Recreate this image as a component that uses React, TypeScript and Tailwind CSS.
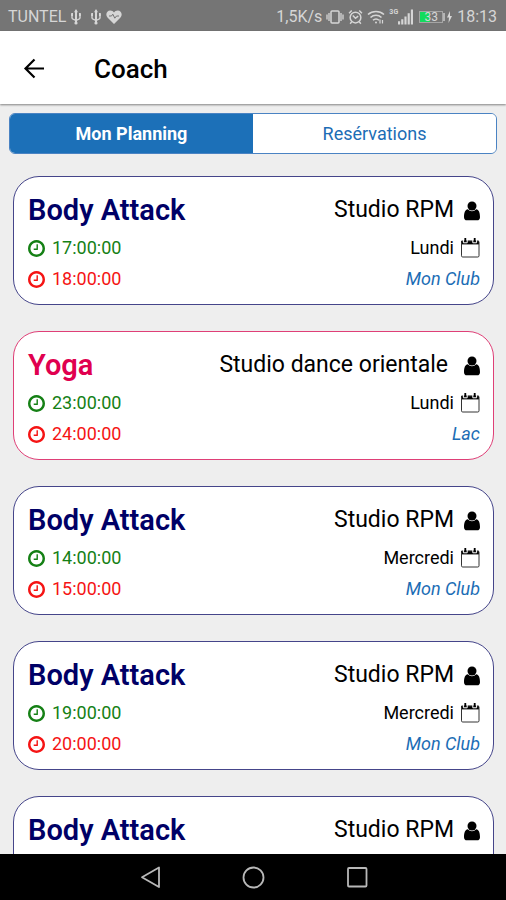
import { FC } from "react";

type Session = {
  id: number;
  title: string;
  studio: string;
  start?: string;
  end?: string;
  day?: string;
  club?: string;
  featured?: boolean;
};

const sessions: Session[] = [
  { id: 1, title: "Body Attack", studio: "Studio RPM", start: "17:00:00", end: "18:00:00", day: "Lundi", club: "Mon Club" },
  { id: 2, title: "Yoga", studio: "Studio dance orientale", start: "23:00:00", end: "24:00:00", day: "Lundi", club: "Lac", featured: true },
  { id: 3, title: "Body Attack", studio: "Studio RPM", start: "14:00:00", end: "15:00:00", day: "Mercredi", club: "Mon Club" },
  { id: 4, title: "Body Attack", studio: "Studio RPM", start: "19:00:00", end: "20:00:00", day: "Mercredi", club: "Mon Club" },
  { id: 5, title: "Body Attack", studio: "Studio RPM" },
];

const UserIcon: FC = () => (
  <svg viewBox="0 0 16 20" className="w-4 h-5" fill="currentColor" aria-hidden="true">
    <circle cx="8" cy="5" r="4.5" />
    <path d="M3.8 8.2C5 9.500 6.400 10.200 8 10.200s3-.7 4.200-2C14.800 8.500 16 11.500 16 16.200c0 1.900-1.200 3.100-2.800 3.100H2.800C1.200 19.300 0 18.100 0 16.200 0 11.500 1.200 8.500 3.800 8.200z" />
  </svg>
);

const ClockIcon: FC = () => (
  <svg viewBox="128 128 1536 1536" className="w-[17px] h-[17px]" fill="currentColor" aria-hidden="true">
    <path d="M1024 544v448q0 14-9 23t-23 9h-320q-14 0-23-9t-9-23v-64q0-14 9-23t23-9h224v-352q0-14 9-23t23-9h64q14 0 23 9t9 23zm416 352q0-148-73-273t-198-198-273-73-273 73-198 198-73 273 73 273 198 198 273 73 273-73 198-198 73-273zm224 0q0 209-103 385.5t-279.5 279.5-385.5 103-385.5-103-279.5-279.5-103-385.5 103-385.5 279.5-279.5 385.5-103 385.5 103 279.5 279.5 103 385.5z" />
  </svg>
);

const CalendarIcon: FC = () => (
  <svg viewBox="0 0 20 20" className="w-5 h-5" fill="none" stroke="currentColor" aria-hidden="true">
    <path d="M1 2.8h18v3.6H1z" fill="currentColor" stroke="none" />
    <rect x="1.5" y="3" width="17.5" height="16" rx="1.2" stroke="#333" />
    <path d="M3.4 2v2.8h3.8V2M12.8 2v2.8h3.8V2" stroke="#fff" />
    <path d="M5.3 0v4M14.7 0v4" strokeWidth="1.8" />
  </svg>
);

const UsbIcon: FC = () => (
  <svg viewBox="0 0 12 16" className="w-3 h-4" fill="none" stroke="currentColor" strokeWidth="1.4" aria-hidden="true">
    <path d="M2 5v4c0 1.8 4 1.5 4 3M10 5v4c0 1.8-4 1.5-4 3" />
    <path d="M6 1.5v12" strokeWidth="2" />
    <path d="M6 0 4 3.2h4zM1.2 4h1.8v3H1.2zM9 4h1.8v3H9z" fill="currentColor" stroke="none" />
    <circle cx="6" cy="14" r="1.6" fill="currentColor" stroke="none" />
  </svg>
);

const StatusBar: FC = () => (
  <div className="h-[31px] shrink-0 flex items-center justify-between bg-[#757575] pt-0.5 pl-2 pr-[9px] text-base text-[#d6d6d6]">
    <div className="flex items-center gap-1">
      <span>TUNTEL</span>
      <div className="flex gap-2">
        <UsbIcon />
        <UsbIcon />
      </div>
      <svg viewBox="0 0 16 14" className="w-4 h-4" aria-hidden="true">
        <path d="M8 14 1.5 7.6C-1 4.5.8.4 4.2.4 6 .4 7.3 1.3 8 2.5 8.7 1.3 10 .4 11.8.4c3.4 0 5.2 4.1 2.7 7.2z" fill="currentColor" />
        <path d="M3 6h2.5l1.3-1.8 2 4L10.5 6H13" fill="none" stroke="#757575" />
      </svg>
    </div>
    <div className="flex items-center gap-1">
      <span>1,5K/s</span>
      <svg viewBox="0 0 18 14" className="w-[18px] h-4" fill="none" stroke="currentColor" strokeWidth="1.5" aria-hidden="true">
        <rect x="5" y="1" width="8" height="12" rx="1" />
        <path d="M3 3v8M1 4.5v5M15 3v8M17 4.5v5" strokeWidth="1.3" />
      </svg>
      <svg viewBox="0 0 14 14" className="w-[15px] h-4" fill="none" stroke="currentColor" strokeWidth="1.4" aria-hidden="true">
        <circle cx="7" cy="7.5" r="5" />
        <path d="M4.5 5.5 7 8.2l2.5-2M1 3.5 3.5 1M13 3.5 10.5 1M3.5 11.5 2 13.2M10.5 11.5l1.5 1.7" />
      </svg>
      <svg viewBox="0 0 18 14" className="w-[18px] h-4" fill="none" stroke="currentColor" strokeWidth="1.6" aria-hidden="true">
        <path d="M1 4.5C5.5.5 12.5.5 17 4.5M3.5 7.5c3.2-3 7.8-3 11 0M6 10.3c1.7-1.7 4.3-1.7 6 0" />
        <circle cx="9" cy="12.5" r="1" fill="currentColor" stroke="none" />
        <path d="M13 13.5v-4M15.5 10v3.5" strokeWidth="1.2" />
      </svg>
      <div className="flex items-start">
        <span className="text-[7px] leading-none font-bold">3G</span>
        <svg viewBox="0 0 14 14" className="w-[15px] h-4" fill="currentColor" aria-hidden="true">
          <path d="M0 11h2v3H0zM3 9h2v5H3zM6 6.5h2V14H6zM9 3.5h2V14H9zM12 0h2v14h-2z" />
        </svg>
      </div>
      <div className="flex items-center ml-0.5">
        <div className="w-6 h-3 flex items-center justify-center border border-[#a5a5a5] bg-linear-to-r from-[#12dc5c] from-45% to-[#757575] to-45% text-xs leading-none">
          33
        </div>
        <div className="w-0.5 h-2 bg-[#b5b5b5]" />
        <svg viewBox="0 0 6 12" className="w-2 h-3" fill="currentColor" aria-hidden="true">
          <path d="M4 0 1 6.5h2L2.5 12 6 5H4z" />
        </svg>
      </div>
      <span>18:13</span>
    </div>
  </div>
);

const SessionCard: FC<{ session: Session }> = ({ session }) => (
  <li
    className={`flex flex-col min-h-[129px] bg-white border rounded-[26px] pl-3.5 pr-[13px] pt-[15px] pb-[13px] ${
      session.featured ? "border-[#df3f77]" : "border-[#45458a]"
    }`}
  >
    <div className="flex justify-between items-center h-[37px]">
      <h2
        className={`text-[29px] font-semibold ${
          session.featured ? "text-[#e0004f]" : "text-[#000066]"
        }`}
      >
        {session.title}
      </h2>
      <p className={`flex items-center text-[23px] ${session.featured ? "gap-4" : "gap-2.5"}`}>
        {session.studio}
        <UserIcon />
      </p>
    </div>
    {session.start && (
      <div className="flex justify-between items-center h-[38px] text-lg">
        <p className="flex items-center gap-[7px] text-[#158015]">
          <ClockIcon />
          {session.start}
        </p>
        <p className="flex items-center gap-1.5">
          {session.day}
          <CalendarIcon />
        </p>
      </div>
    )}
    {session.end && (
      <div className="flex justify-between items-center h-6 text-lg">
        <p className="flex items-center gap-[7px] text-[#f51414]">
          <ClockIcon />
          {session.end}
        </p>
        <p className="italic text-[#1c6db5]">{session.club}</p>
      </div>
    )}
  </li>
);

const App: FC = () => {
  return (
    <div className="h-screen flex flex-col overflow-hidden bg-[#eeeeee] font-['Roboto',sans-serif] text-black">
      <StatusBar />
      <header className="h-[73px] shrink-0 flex items-center gap-12 bg-white px-[22px] pt-[3px] shadow-[0_1px_2px_rgba(0,0,0,0.45)]">
        <button type="button" aria-label="Retour">
          <svg viewBox="0 0 24 24" className="w-6 h-6" fill="none" stroke="currentColor" strokeWidth="2.2" aria-hidden="true">
            <path d="M22 11.5H3.5M12.5 2.5l-9 9 9 9" />
          </svg>
        </button>
        <h1 className="text-[26px] font-medium">Coach</h1>
      </header>
      <main className="flex-1 min-h-0 overflow-hidden">
        <div className="flex h-[41px] mx-[9px] mt-[9px] border border-[#4a83c3] rounded-md overflow-hidden text-lg text-[#1c6db5]">
          <button type="button" className="flex-1 bg-[#1c70b8] text-white font-bold">
            Mon Planning
          </button>
          <button type="button" className="flex-1 bg-white">
            Resérvations
          </button>
        </div>
        <ul className="flex flex-col gap-[26px] pl-[13px] pr-3 pt-[22px]">
          {sessions.map((session) => (
            <SessionCard key={session.id} session={session} />
          ))}
        </ul>
      </main>
      <nav className="h-[46px] shrink-0 flex items-center justify-center gap-20 bg-black text-[#b8b8b8]">
        <button type="button" aria-label="Précédent">
          <svg viewBox="0 0 24 24" className="w-6 h-6" fill="none" stroke="currentColor" strokeWidth="1.8" strokeLinejoin="round" aria-hidden="true">
            <path d="M22 2.5V22L5 12.3z" />
          </svg>
        </button>
        <button type="button" aria-label="Accueil">
          <svg viewBox="0 0 24 24" className="w-6 h-6" fill="none" stroke="currentColor" strokeWidth="1.8" aria-hidden="true">
            <circle cx="12.5" cy="12.5" r="10" />
          </svg>
        </button>
        <button type="button" aria-label="Applications">
          <svg viewBox="0 0 24 24" className="w-6 h-6" fill="none" stroke="currentColor" strokeWidth="1.8" aria-hidden="true">
            <rect x="3" y="3" width="18.5" height="18.5" rx="1" />
          </svg>
        </button>
      </nav>
    </div>
  );
};

export default App;
